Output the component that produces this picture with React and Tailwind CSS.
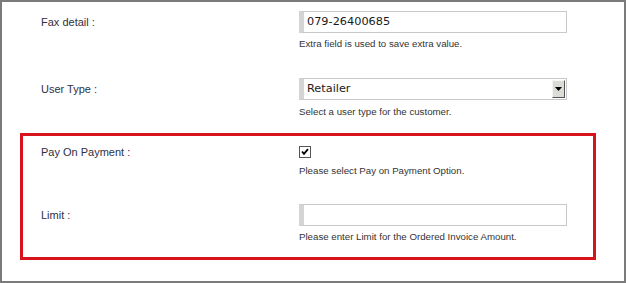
import React from "react";

const labelCls = "w-[258px] shrink-0 text-[11px] text-[#2f2f3f] flex items-center";
const helpCls = "text-[9.7px] leading-[14px] text-[#333333]";
const inputBox =
  "w-[268px] h-[22px] border border-[#c9c9c9] border-l-[5px] border-l-[#d4d4d4] bg-white flex items-center pl-[3px] text-[11.3px] text-[#1a1a1a]";

function Row({ label, children, help, helpMt = "mt-[4px]", rowH = "h-[22px]" }) {
  return (
    <div className="flex">
      <div className={`${labelCls} ${rowH}`}>{label}</div>
      <div className="flex flex-col">
        {children}
        <div className={`${helpCls} ${helpMt}`}>{help}</div>
      </div>
    </div>
  );
}

export default function App() {
  return (
    <div
      className="w-[626px] h-[283px] bg-white border-2 border-[#7b7b7b] box-border pt-[9px]"
      style={{ fontFamily: '"Liberation Sans", Arial, sans-serif' }}
    >
      <div className="pl-[39px]">
        <Row label="Fax detail :" help="Extra field is used to save extra value.">
          <div className={inputBox} style={{ fontFamily: '"DejaVu Sans", Tahoma, sans-serif' }}>
            079-26400685
          </div>
        </Row>
        <div className="mt-[27px]">
          <Row label="User Type :" help="Select a user type for the customer." helpMt="mt-[5px]">
            <div
              className="w-[268px] h-[22px] border border-[#c9c9c9] border-l-[5px] border-l-[#d4d4d4] bg-white flex items-center justify-between pl-[3px] pr-[1px] text-[11.3px] text-[#1a1a1a]"
              style={{ fontFamily: '"DejaVu Sans", Tahoma, sans-serif' }}
            >
              <span>Retailer</span>
              <div className="w-[13px] h-[18px] bg-[#dcdcd6] border border-t-[#f4f4f4] border-l-[#f4f4f4] border-r-[#555555] border-b-[#555555] flex items-center justify-center">
                <svg width="7" height="4" viewBox="0 0 7 4">
                  <polygon points="0,0 7,0 3.5,4" fill="#000" />
                </svg>
              </div>
            </div>
          </Row>
        </div>
      </div>
      <div className="mt-[14px] ml-[18px] w-[576px] border-[3px] border-[#d7141c] pl-[18px] pt-[10px] pb-[13px]">
        <Row
          label="Pay On Payment :"
          help="Please select Pay on Payment Option."
          helpMt="mt-[6px]"
          rowH="h-[13px]"
        >
          <div className="w-[12px] h-[12px] border border-[#555555] bg-white flex items-center justify-center">
            <svg width="8" height="8" viewBox="0 0 8 8">
              <path d="M1 3.5 L3 5.8 L7 1.2" stroke="#000" strokeWidth="1.8" fill="none" />
            </svg>
          </div>
        </Row>
        <div className="mt-[26px]">
          <Row label="Limit :" help="Please enter Limit for the Ordered Invoice Amount.">
            <div className={inputBox}></div>
          </Row>
        </div>
      </div>
    </div>
  );
}
